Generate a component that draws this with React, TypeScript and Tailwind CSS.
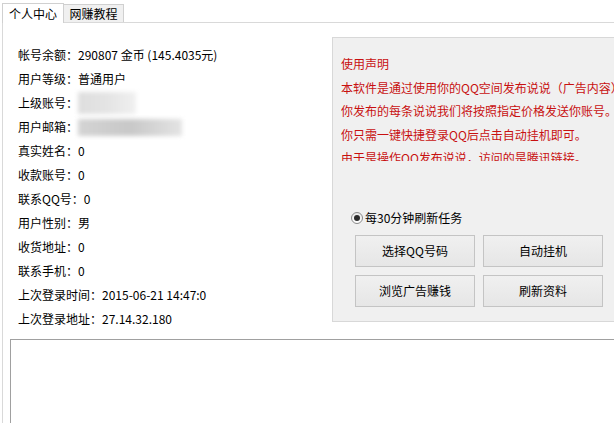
import React from "react";

const rows: { label: string; value?: string; blur?: number }[] = [
  { label: "帐号余额：", value: "290807 金币 (145.4035元)" },
  { label: "用户等级：", value: "普通用户" },
  { label: "上级账号：", blur: 58 },
  { label: "用户邮箱：", blur: 104 },
  { label: "真实姓名：", value: "0" },
  { label: "收款账号：", value: "0" },
  { label: "联系QQ号：", value: "0" },
  { label: "用户性别：", value: "男" },
  { label: "收货地址：", value: "0" },
  { label: "联系手机：", value: "0" },
  { label: "上次登录时间：", value: "2015-06-21 14:47:0" },
  { label: "上次登录地址：", value: "27.14.32.180" },
];

const notice = [
  "使用声明",
  "本软件是通过使用你的QQ空间发布说说（广告内容）",
  "你发布的每条说说我们将按照指定价格发送你账号。",
  "你只需一键快捷登录QQ后点击自动挂机即可。",
  "由于是操作QQ发布说说，访问的是腾讯链接。",
];

function Btn({ children }: { children: React.ReactNode }) {
  return (
    <div className="h-[32px] w-[120px] flex items-center justify-center border border-[#c4c4c4] bg-gradient-to-b from-[#f0f0f0] to-[#e6e6e6] text-[12px] text-black">
      {children}
    </div>
  );
}

export default function App() {
  return (
    <div className="w-[614px] h-[423px] overflow-hidden bg-white text-[12px] text-black font-['Noto_Sans_CJK_SC',sans-serif] flex flex-col">
      {/* tabs */}
      <div className="flex items-end h-[22px] pl-[2px] shrink-0">
        <div className="relative z-10 h-[20px] w-[62px] -mb-px border border-b-0 border-[#d0d0d0] bg-white flex items-center justify-center leading-none">
          个人中心
        </div>
        <div className="h-[18px] w-[60px] border border-l-0 border-b-0 border-[#d0d0d0] bg-[#f0f0f0] flex items-center justify-center leading-none">
          网赚教程
        </div>
      </div>
      {/* pane */}
      <div className="flex-1 ml-[2px] border-l border-t border-[#d9d9d9] flex flex-col">
        <div className="flex h-[299px] shrink-0">
          <div className="w-[329px] shrink-0 pl-[15px] pt-[20px]">
            {rows.map((r) => (
              <div key={r.label} className="h-[24px] leading-[24px] flex items-center whitespace-nowrap">
                <span>{r.label}</span>
                {r.value && <span>{r.value}</span>}
                {r.blur && (
                  <span
                    className={
                      r.blur > 80
                        ? "inline-block h-[17px] w-[104px] bg-gradient-to-r from-[#d4d4d4] via-[#c8c8c8] to-[#e4e4e4] blur-[2px]"
                        : "inline-block h-[22px] w-[58px] bg-gradient-to-r from-[#dedede] via-[#e4e4e4] to-[#f0f0f0] blur-[2px]"
                    }
                  />
                )}
              </div>
            ))}
          </div>
          <div className="mt-[14px] h-[285px] w-[300px] shrink-0 border border-[#d8d8d8] bg-[#f0f0f0] flex flex-col">
            <div className="ml-[8px] mt-[14px] h-[109px] overflow-hidden text-[#c81010] leading-[23.5px] whitespace-nowrap">
              {notice.map((n) => (
                <div key={n}>{n}</div>
              ))}
            </div>
            <div className="ml-[18px] mt-[49px] flex items-center h-[16px]">
              <span className="w-[12px] h-[12px] rounded-full border border-[#8a8a8a] bg-gradient-to-b from-[#e8e8e8] to-[#ffffff] flex items-center justify-center">
                <span className="w-[6px] h-[6px] rounded-full bg-[#2a2a2a]" />
              </span>
              <span className="ml-[2px]">每30分钟刷新任务</span>
            </div>
            <div className="ml-[22px] mt-[9px] grid grid-cols-[120px_120px] gap-x-[8px] gap-y-[8px]">
              <Btn>选择QQ号码</Btn>
              <Btn>自动挂机</Btn>
              <Btn>浏览广告赚钱</Btn>
              <Btn>刷新资料</Btn>
            </div>
          </div>
        </div>
        <div className="ml-[7px] mt-[17px] flex-1 border-l border-t border-[#a0a0a0] bg-white" />
      </div>
    </div>
  );
}
